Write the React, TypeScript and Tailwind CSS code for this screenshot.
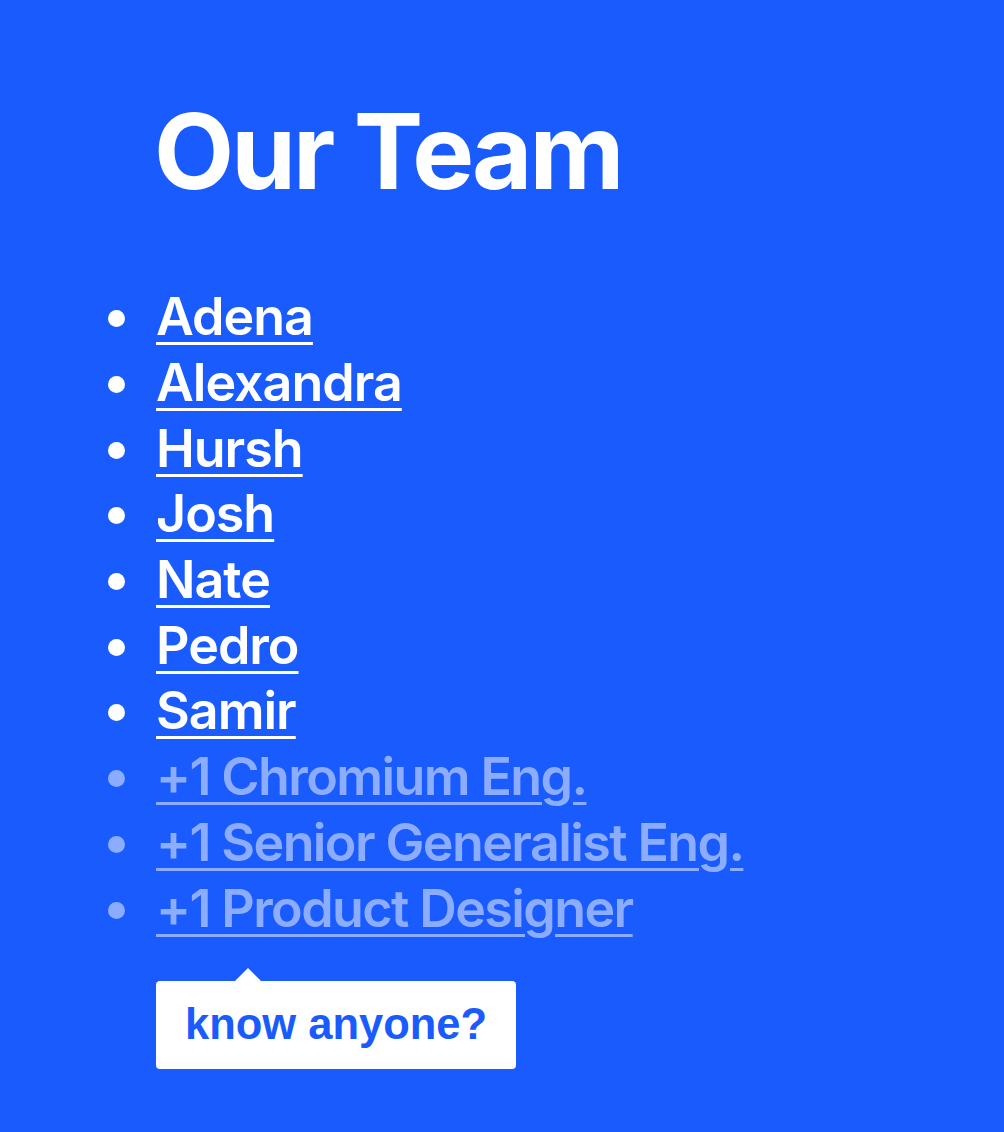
export default function App() {
  const members = ["Adena", "Alexandra", "Hursh", "Josh", "Nate", "Pedro", "Samir"];
  const openings = ["+1 Chromium Eng.", "+1 Senior Generalist Eng.", "+1 Product Designer"];
  return (
    <div className="min-h-[1132px] w-full bg-[#195bfd] pt-[86px] pb-[60px]" style={{ fontFamily: "Inter, 'Noto Sans', sans-serif" }}>
      <h1 className="ml-[154px] text-[104px] leading-[130px] font-bold tracking-[-3px] text-white">Our Team</h1>
      <ul className="mt-[68px] flex flex-col">
        {members.map((m) => (
          <li key={m} className="flex items-center h-[65.7px]">
            <span className="ml-[108px] w-[17px] h-[17px] rounded-full bg-white mt-[4px]" />
            <a href="#" className="ml-[31px] text-[52px] leading-[65px] font-semibold text-white underline decoration-[3px] underline-offset-[7px] tracking-[-1px]">{m}</a>
          </li>
        ))}
        {openings.map((m) => (
          <li key={m} className="flex items-center h-[65.7px]">
            <span className="ml-[108px] w-[17px] h-[17px] rounded-full bg-[#8cacff] mt-[4px]" />
            <a href="#" className="ml-[31px] text-[52px] leading-[65px] font-semibold text-[#8cacff] underline decoration-[3px] underline-offset-[7px] tracking-[-1.6px]">{m}</a>
          </li>
        ))}
      </ul>
      <div className="relative ml-[156px] mt-[40px] w-[360px] h-[88px] rounded-[4px] bg-white flex items-center pl-[29px]">
        <span className="absolute -top-[13px] left-[78px] w-0 h-0 border-l-[14px] border-r-[14px] border-b-[14px] border-l-transparent border-r-transparent border-b-white" />
        <span className="text-[43.5px] font-bold text-[#195bfd]" style={{ fontFamily: "'Liberation Sans', Arial, sans-serif" }}>know anyone?</span>
      </div>
    </div>
  );
}
